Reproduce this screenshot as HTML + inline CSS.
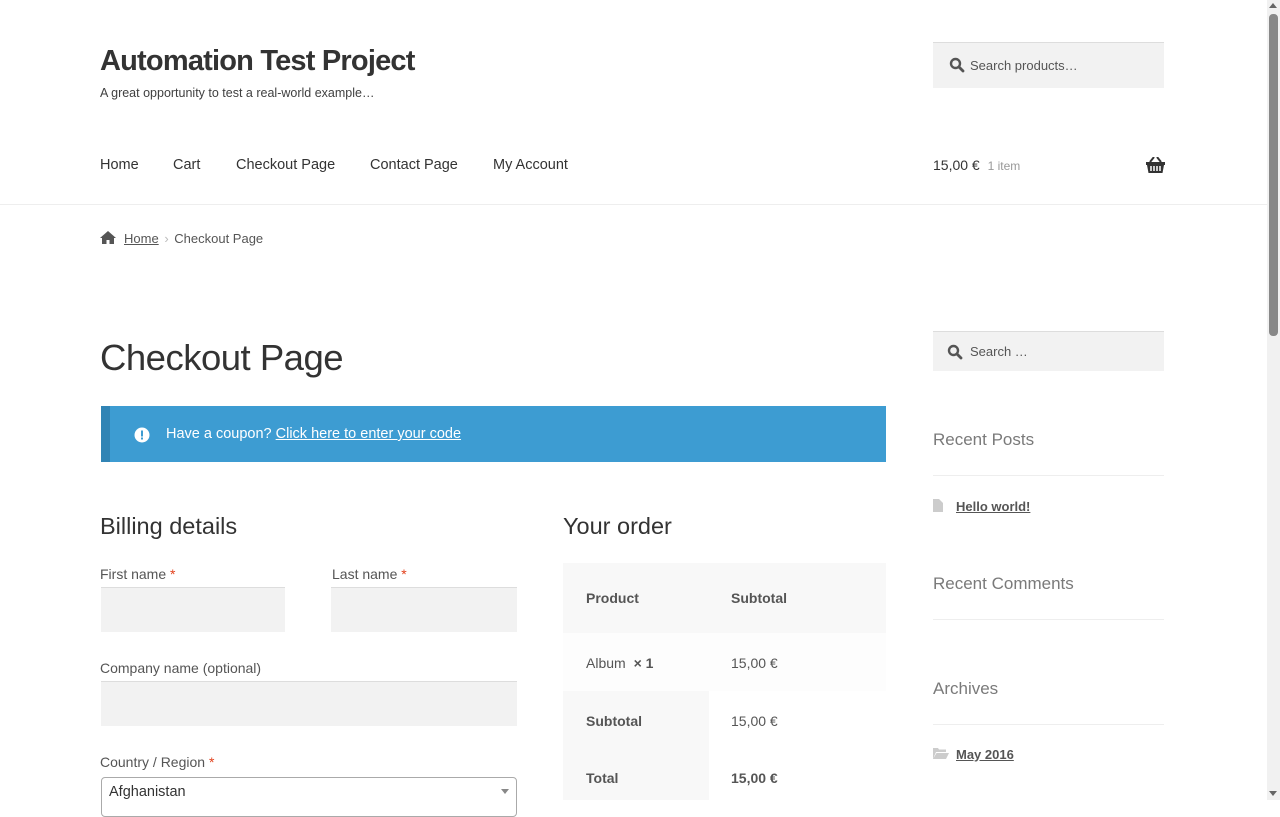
<!DOCTYPE html>
<html><head><meta charset="utf-8"><style>
*{box-sizing:border-box;margin:0;padding:0}
body{width:1280px;height:800px;overflow:hidden;background:#fff;font-family:"Liberation Sans",sans-serif;color:#43454b;position:relative}
.a{position:absolute;white-space:nowrap}
u{text-decoration:underline}
</style></head><body>
<div class="a" style="left:100px;top:45px;font-size:29px;font-weight:bold;color:#333;letter-spacing:-0.8px">Automation Test Project</div>
<div class="a" style="left:100px;top:86px;font-size:12.5px;color:#404040">A great opportunity to test a real-world example…</div>
<div class="a" style="left:933px;top:42px;width:231px;height:46px;background:#f2f2f2;border-top:1px solid #ddd"></div>
<svg class="a" style="left:949px;top:57px" width="16" height="16" viewBox="0 0 16 16"><circle cx="6.5" cy="6.5" r="4.5" fill="none" stroke="#555" stroke-width="2.4"/><line x1="10" y1="10" x2="14" y2="14" stroke="#555" stroke-width="2.8" stroke-linecap="round"/></svg>
<div class="a" style="left:970px;top:58px;font-size:13px;color:#555">Search products…</div>
<div class="a" style="top:157px;left:100px;font-size:14.5px;color:#333">Home</div>
<div class="a" style="top:157px;left:173px;font-size:14.5px;color:#333">Cart</div>
<div class="a" style="top:157px;left:236px;font-size:14.5px;color:#333">Checkout Page</div>
<div class="a" style="top:157px;left:370px;font-size:14.5px;color:#333">Contact Page</div>
<div class="a" style="top:157px;left:493px;font-size:14.5px;color:#333">My Account</div>
<div class="a" style="top:157px;left:933px;font-size:14px;color:#333">15,00 € <span style="font-size:12px;color:#999;margin-left:4px">1 item</span></div>
<svg class="a" style="left:1146px;top:157px" width="19" height="16" viewBox="0 0 19 16"><path d="M0 5h19v3h-1l-1.5 8h-14L1 8H0z" fill="#333"/><path d="M4 5L8 0M15 5L11 0" stroke="#333" stroke-width="2"/><path d="M5 9v5M8 9v5M11 9v5M14 9v5" stroke="#fff" stroke-width="1.5"/></svg>
<div class="a" style="left:0;top:204px;width:1268px;height:1px;background:#eee"></div>
<svg class="a" style="left:100px;top:231px" width="16" height="13" viewBox="0 0 16 13"><path d="M8 0L0 7h2v6h4.5V9h3v4H14V7h2z" fill="#555"/></svg>
<div class="a" style="left:124px;top:231px;font-size:13px;color:#555"><u>Home</u> <span style="color:#bbb;margin:0 2px">›</span> Checkout Page</div>
<div class="a" style="left:100px;top:337px;font-size:36.5px;font-weight:300;color:#333;letter-spacing:-0.5px">Checkout Page</div>
<div class="a" style="left:101px;top:406px;width:785px;height:56px;background:#3d9cd2;border-left:9px solid #3184b5"></div>
<svg class="a" style="left:134px;top:427px" width="16" height="16" viewBox="0 0 16 16"><circle cx="8" cy="8" r="7.5" fill="#fff"/><rect x="7" y="3.5" width="2" height="6" fill="#3d9cd2"/><rect x="7" y="10.5" width="2" height="2" fill="#3d9cd2"/></svg>
<div class="a" style="left:166px;top:426px;font-size:14.5px;color:#fff">Have a coupon? <u>Click here to enter your code</u></div>
<div class="a" style="left:100px;top:513px;font-size:23.5px;font-weight:300;color:#333">Billing details</div>
<div class="a" style="left:100px;top:566px;font-size:14px;color:#555">First name <span style="color:#e2401c">*</span></div>
<div class="a" style="left:332px;top:566px;font-size:14px;color:#555">Last name <span style="color:#e2401c">*</span></div>
<div class="a" style="left:101px;top:587px;width:184px;height:45px;background:#f2f2f2;border-top:1px solid #ddd"></div>
<div class="a" style="left:331px;top:587px;width:186px;height:45px;background:#f2f2f2;border-top:1px solid #ddd"></div>
<div class="a" style="left:100px;top:660px;font-size:14px;color:#555">Company name (optional)</div>
<div class="a" style="left:101px;top:681px;width:416px;height:45px;background:#f2f2f2;border-top:1px solid #ddd"></div>
<div class="a" style="left:100px;top:754px;font-size:14px;color:#555">Country / Region <span style="color:#e2401c">*</span></div>
<div class="a" style="left:101px;top:777px;width:416px;height:40px;border:1px solid #aaa;border-radius:4px;background:#fff"></div>
<div class="a" style="left:109px;top:784px;font-size:14.5px;color:#333">Afghanistan</div>
<div class="a" style="left:501px;top:789px;border:4px solid transparent;border-top:5px solid #888"></div>
<div class="a" style="left:563px;top:513px;font-size:23.5px;font-weight:300;color:#333">Your order</div>
<div class="a" style="left:563px;top:563px;width:323px;height:70px;background:#f8f8f8"></div>
<div class="a" style="left:563px;top:633px;width:323px;height:58px;background:#fdfdfd"></div>
<div class="a" style="left:563px;top:691px;width:146px;height:109px;background:#f8f8f8"></div>
<div class="a" style="left:586px;top:590px;font-size:14px;font-weight:bold;color:#555">Product</div>
<div class="a" style="left:731px;top:590px;font-size:14px;font-weight:bold;color:#555">Subtotal</div>
<div class="a" style="left:586px;top:655px;font-size:14px;color:#555">Album <b style="margin-left:4px">× 1</b></div>
<div class="a" style="left:731px;top:655px;font-size:14px;color:#555">15,00 €</div>
<div class="a" style="left:586px;top:713px;font-size:14px;font-weight:bold;color:#555">Subtotal</div>
<div class="a" style="left:731px;top:713px;font-size:14px;color:#555">15,00 €</div>
<div class="a" style="left:586px;top:770px;font-size:14px;font-weight:bold;color:#555">Total</div>
<div class="a" style="left:731px;top:770px;font-size:14px;font-weight:bold;color:#555">15,00 €</div>
<div class="a" style="left:933px;top:331px;width:231px;height:40px;background:#f2f2f2;border-top:1px solid #ddd"></div>
<svg class="a" style="left:947px;top:344px" width="16" height="16" viewBox="0 0 16 16"><circle cx="6.5" cy="6.5" r="4.5" fill="none" stroke="#555" stroke-width="2.4"/><line x1="10" y1="10" x2="14" y2="14" stroke="#555" stroke-width="2.8" stroke-linecap="round"/></svg>
<div class="a" style="left:970px;top:344px;font-size:13px;color:#555">Search …</div>
<div class="a" style="left:933px;top:430px;font-size:17px;font-weight:300;color:#7a7a7a">Recent Posts</div>
<div class="a" style="left:933px;top:475px;width:231px;height:1px;background:#eee"></div>
<svg class="a" style="left:933px;top:499px" width="10" height="13" viewBox="0 0 10 13"><path d="M0 0h6l4 4v9H0z" fill="#ccc"/></svg>
<div class="a" style="left:956px;top:499px;font-size:13px;font-weight:bold;color:#555"><u>Hello world!</u></div>
<div class="a" style="left:933px;top:574px;font-size:17px;font-weight:300;color:#7a7a7a">Recent Comments</div>
<div class="a" style="left:933px;top:619px;width:231px;height:1px;background:#eee"></div>
<div class="a" style="left:933px;top:679px;font-size:17px;font-weight:300;color:#7a7a7a">Archives</div>
<div class="a" style="left:933px;top:724px;width:231px;height:1px;background:#eee"></div>
<svg class="a" style="left:933px;top:748px" width="16" height="11" viewBox="0 0 16 11"><path d="M0 0h5l1 1.5h7V4H3L0 11zM3.5 5H16l-3 6H0z" fill="#ccc"/></svg>
<div class="a" style="left:956px;top:747px;font-size:13px;font-weight:bold;color:#555"><u>May 2016</u></div>
<div class="a" style="left:1267px;top:0;width:13px;height:800px;background:#f1f1f1"></div>
<div class="a" style="left:1269px;top:14px;width:9px;height:322px;background:#888;border-radius:4px"></div>
<div class="a" style="left:1269px;top:3px;border:4px solid transparent;border-bottom:5px solid #666;border-top:0"></div>
<div class="a" style="left:1269px;top:791px;border:4px solid transparent;border-top:5px solid #666;border-bottom:0"></div>
</body></html>
